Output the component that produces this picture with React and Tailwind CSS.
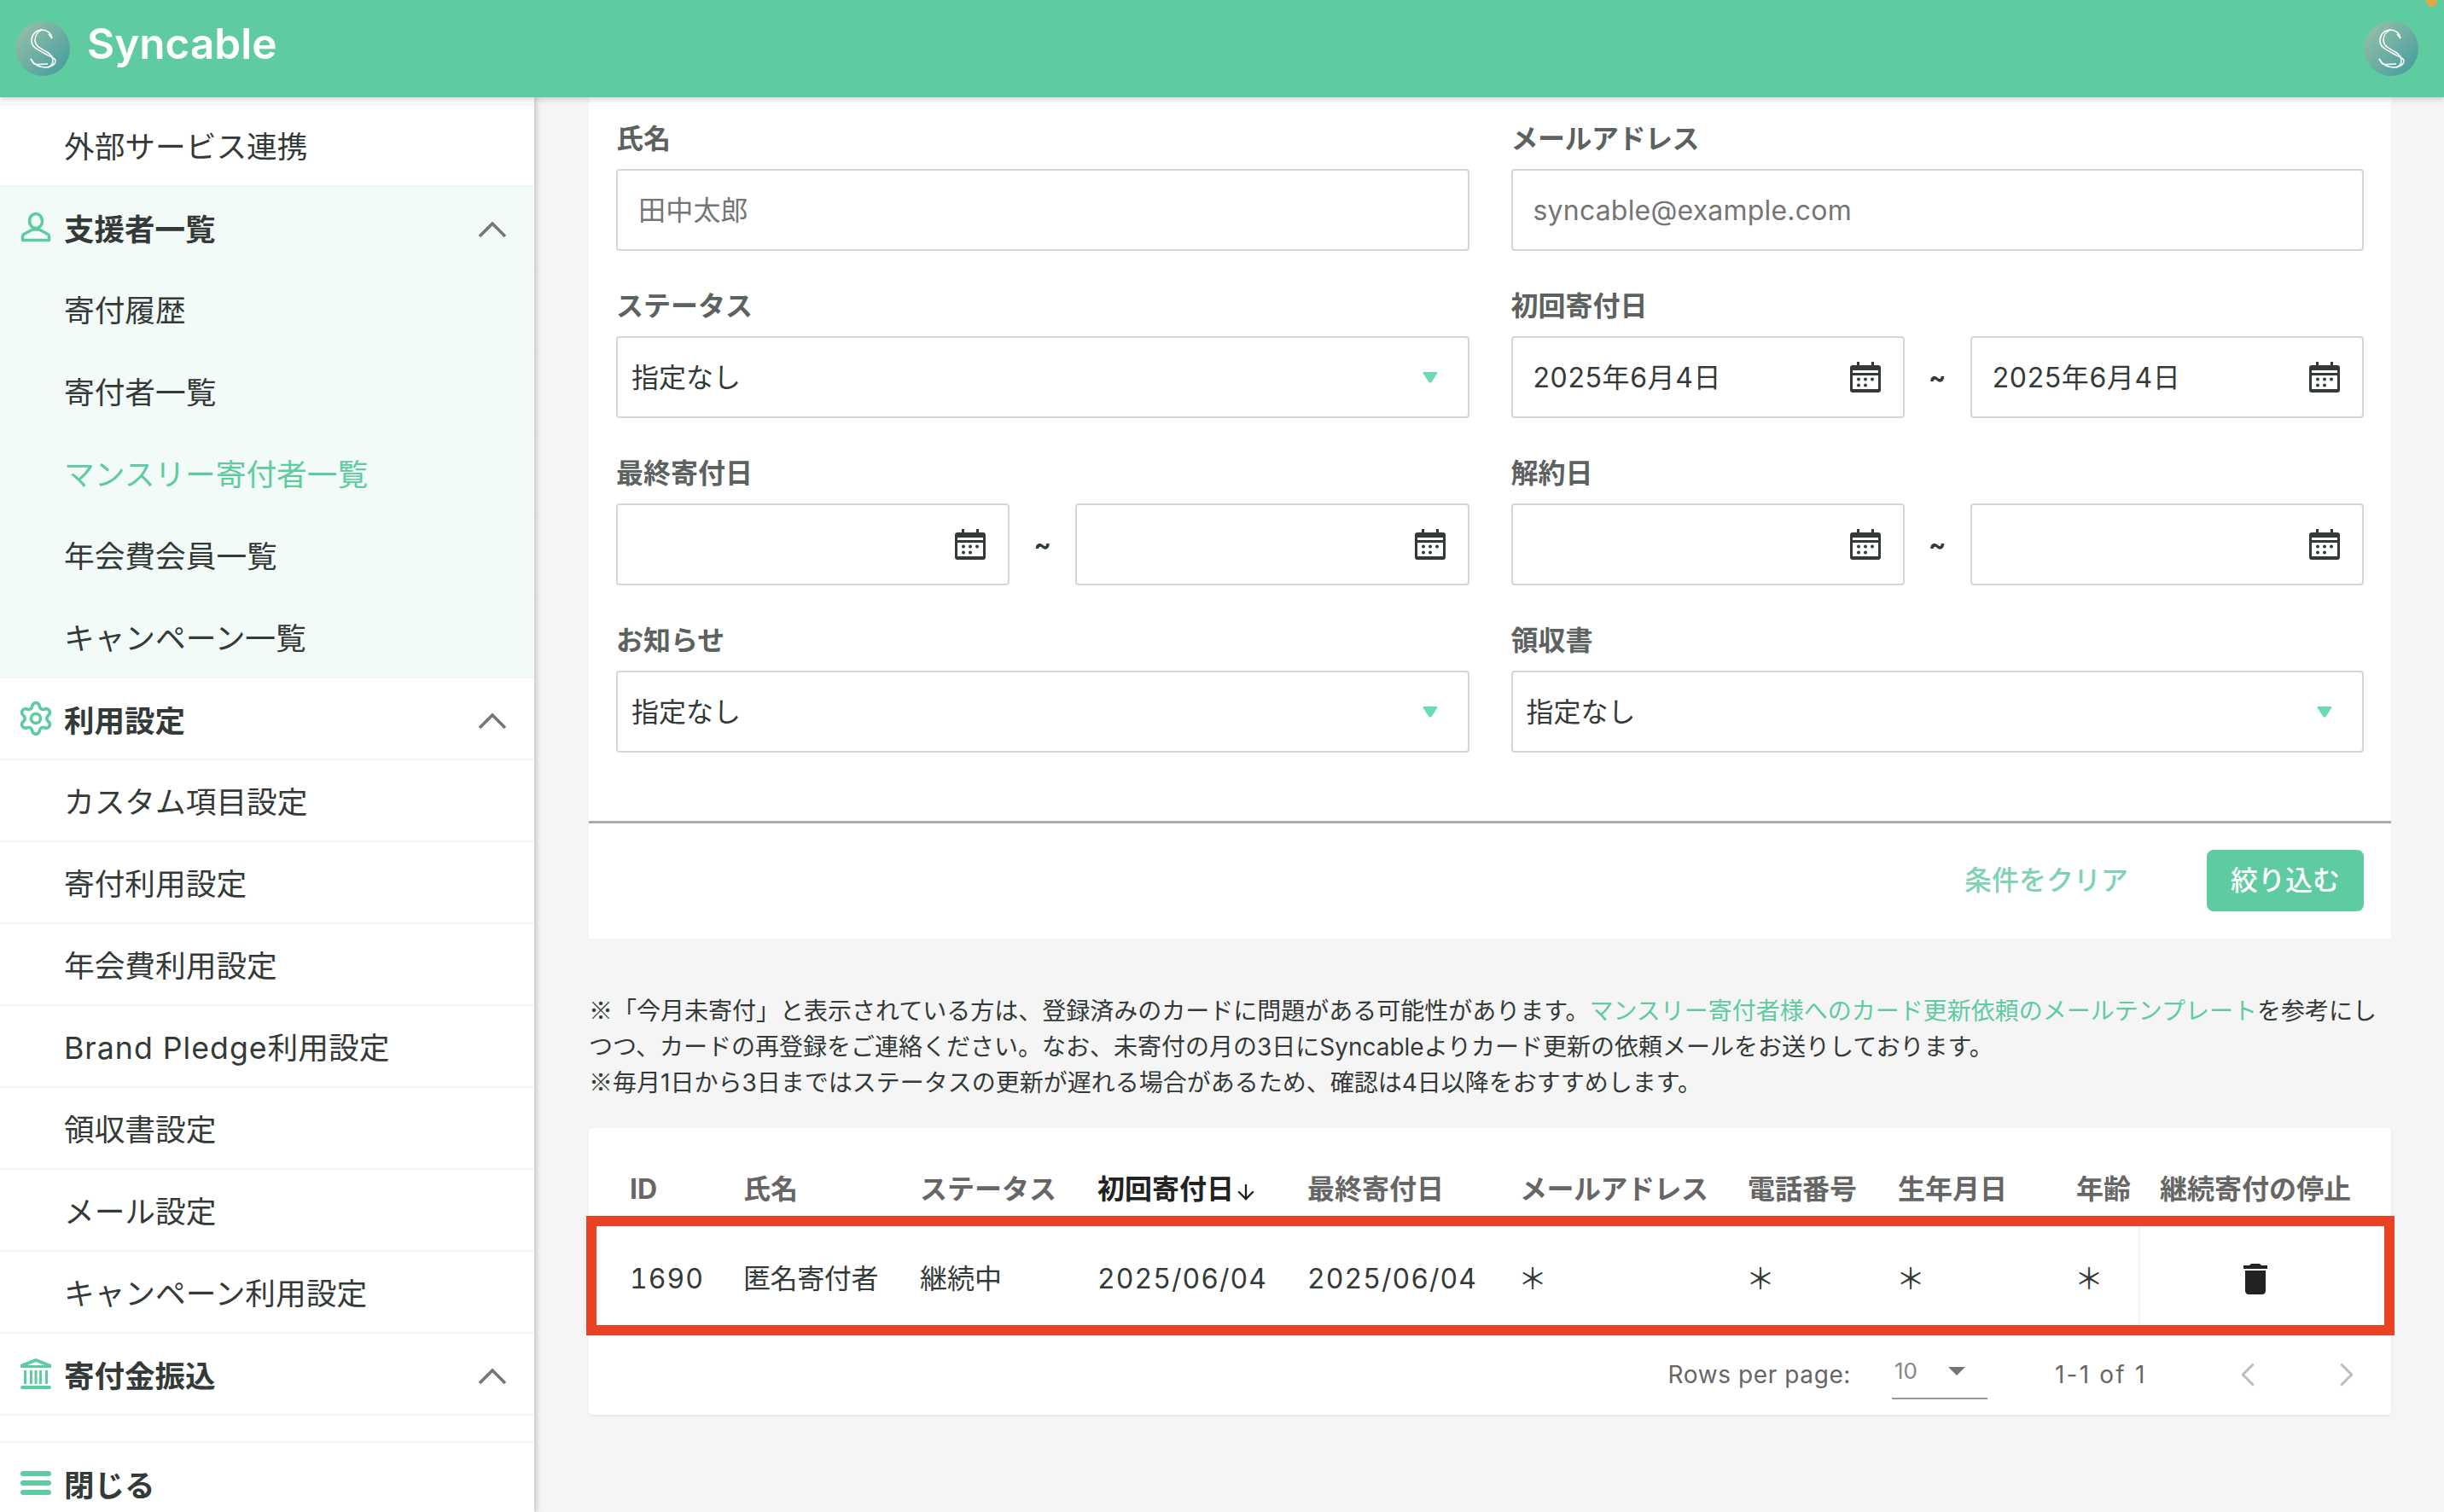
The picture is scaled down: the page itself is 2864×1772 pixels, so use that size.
import { Settings, ChevronLeft, ChevronRight, ArrowDown } from 'lucide-react';

function LogoMark() {
  return (
    <div className="w-[64px] h-[64px] rounded-full bg-gradient-to-br from-[#9bc2a8] to-[#3a9a9e] shrink-0">
      <svg viewBox="0 0 64 64" className="w-full h-full" fill="none" stroke="#fff" strokeWidth="1.5">
        <path d="M43 20 C42 13 36 10 31 10 C24 10 19 16 19 23 C19 30 26 33 33 37 C40 41 47 43 47 46 C47 51 41 54 35 54 C28 54 21 50 18 44" />
        <path d="M31 10 C26 12 23 17 23 22 C23 29 30 32 37 36 C43 39 44 43 44 47 C44 50 42 52 38 54" />
        <path d="M43 20 L39 15 M18 44 L22 50 C25 51 32 50 38 50" />
      </svg>
    </div>
  );
}

function PersonIcon() {
  return (
    <svg viewBox="0 0 36 36" className="w-[36px] h-[36px]" fill="none" stroke="#5ecba1" strokeWidth="3.5" strokeLinejoin="round">
      <ellipse cx="18" cy="11" rx="7.5" ry="8.5" />
      <path d="M2.5 29 Q2.5 27.5 4 26.5 L14 21 H22 L32 26.5 Q33.5 27.5 33.5 29 V33.5 H2.5 Z" />
    </svg>
  );
}

function BankIcon() {
  return (
    <svg viewBox="0 0 36 36" className="w-[36px] h-[36px]" fill="#5ecba1">
      <path d="M18 0 L36 7 V11 H0 V7 Z M18 4 L8 8 H28 Z" fillRule="evenodd" />
      <rect x="4" y="14" width="3" height="16" />
      <rect x="11" y="14" width="3" height="16" />
      <rect x="22" y="14" width="3" height="16" />
      <rect x="29" y="14" width="3" height="16" />
      <rect x="16.5" y="14" width="3" height="16" />
      <rect x="0" y="32" width="36" height="4" rx="2" />
    </svg>
  );
}

function MenuIcon() {
  return (
    <svg viewBox="0 0 36 32" className="w-[36px] h-[32px]" fill="#5ecba1">
      <rect y="2" width="36" height="6" rx="3" />
      <rect y="13" width="36" height="6" rx="3" />
      <rect y="24" width="36" height="6" rx="3" />
    </svg>
  );
}

function CalendarIcon() {
  return (
    <svg viewBox="0 0 36 36" className="w-[36px] h-[36px] shrink-0">
      <path d="M8 0 H11 V4 H25 V0 H28 V4 H33 Q36 4 36 7 V33 Q36 36 33 36 H3 Q0 36 0 33 V7 Q0 4 3 4 H8 Z" fill="#333a38" />
      <rect x="3" y="10" width="30" height="3" fill="#fff" />
      <rect x="3" y="16" width="30" height="16" fill="#fff" />
      {[10, 18, 26].map((x) => <circle key={x} cx={x} cy="20.5" r="2" fill="#333a38" />)}
      {[10, 18].map((x) => <circle key={x} cx={x} cy="27.5" r="2" fill="#333a38" />)}
    </svg>
  );
}

function TrashIcon() {
  return (
    <svg viewBox="0 0 24 24" className="w-[48px] h-[48px] mx-auto" fill="#222">
      <path d="M6 19c0 1.1.9 2 2 2h8c1.1 0 2-.9 2-2V7H6v12zM19 4h-3.5l-1-1h-5l-1 1H5v2h14V4z" />
    </svg>
  );
}

function NavHead({ icon, label, active, chevron = true }) {
  return (
    <div className={`h-[96px] flex items-center pl-[24px] pr-[32px] border-b-2 border-[#f4f5f5] ${active ? 'bg-[#f2fbf8]' : ''}`}>
      <div className="w-[36px] flex justify-center shrink-0">{icon}</div>
      <span className="ml-[15px] pt-[7px] font-bold text-[35.5px] text-[#333a38]">{label}</span>
      {chevron && (
        <svg viewBox="0 0 34 20" className="ml-auto mt-[6px] w-[34px] h-[20px]" fill="none" stroke="#757575" strokeWidth="3.5">
          <path d="M2 18 L17 3 L32 18" />
        </svg>
      )}
    </div>
  );
}

function NavItem({ label, active, current }) {
  return (
    <div
      className={`h-[96px] flex items-center pl-[75px] pt-[6px] border-b-2 border-[#f4f5f5] text-[35.7px] ${active ? 'bg-[#f2fbf8]' : ''} ${current ? 'text-[#5ecba1]' : 'text-[#333a38]'}`}
    >
      <span>{label}</span>
    </div>
  );
}

function Sidebar() {
  return (
    <aside className="w-[626px] shrink-0 bg-white shadow-[3px_0_6px_rgba(0,0,0,0.18)] z-10 overflow-hidden">
      <div className="h-[9px] border-b-2 border-[#f4f5f5]" />
      <NavItem label="外部サービス連携" />
      <NavHead active icon={<PersonIcon />} label="支援者一覧" />
      <NavItem active label="寄付履歴" />
      <NavItem active label="寄付者一覧" />
      <NavItem active current label="マンスリー寄付者一覧" />
      <NavItem active label="年会費会員一覧" />
      <NavItem active label="キャンペーン一覧" />
      <NavHead icon={<Settings className="text-[#5ecba1] shrink-0" size={44} strokeWidth={2} />} label="利用設定" />
      <NavItem label="カスタム項目設定" />
      <NavItem label="寄付利用設定" />
      <NavItem label="年会費利用設定" />
      <NavItem label={<><span className="tracking-[1px]">Brand Pledge</span>利用設定</>} />
      <NavItem label="領収書設定" />
      <NavItem label="メール設定" />
      <NavItem label="キャンペーン利用設定" />
      <NavHead icon={<BankIcon />} label="寄付金振込" />
      <div className="h-[32px] border-b-2 border-[#f4f5f5]" />
      <NavHead icon={<MenuIcon />} label="閉じる" chevron={false} />
    </aside>
  );
}

function Field({ label, children }) {
  return (
    <div>
      <div className="h-[48px] pt-[3px] flex items-center text-[32px] font-bold text-[#5c6260]">{label}</div>
      <div className="mt-[13px]">{children}</div>
    </div>
  );
}

const boxClass = 'h-[96px] pt-[2px] border-2 border-[#d3d8d7] rounded-[4px] flex items-center bg-white text-[32px]';

function TextInput({ placeholder }) {
  return <div className={`${boxClass} pl-[24px] tracking-[0.2px] text-[#757575]`}>{placeholder}</div>;
}

function SelectInput() {
  return (
    <div className={`${boxClass} pl-[16px] pr-[35px] text-[#333a38]`}>
      指定なし
      <svg viewBox="0 0 18 13" className="ml-auto mb-[2px] w-[18px] h-[13px]" fill="#6ddbb1">
        <path d="M1.5 0 H16.5 Q18 0 17.4 1.5 L10.5 12 Q9 13.5 7.5 12 L0.6 1.5 Q0 0 1.5 0 Z" />
      </svg>
    </div>
  );
}

function DateRange({ from, to }) {
  const box = (value) => (
    <div className={`${boxClass} flex-1 pl-[24px] pr-[26px] tracking-[0.6px] text-[#333a38]`}>
      {value}
      <span className="ml-auto mb-[2px]"><CalendarIcon /></span>
    </div>
  );
  return (
    <div className="flex items-center">
      {box(from)}
      <div className="w-[77px] text-center font-bold text-[30px] text-[#333a38]">~</div>
      {box(to)}
    </div>
  );
}

function FilterCard() {
  return (
    <section className="bg-white">
      <div className="px-[32px] pt-[23px] grid grid-cols-2 gap-x-[49px] gap-y-[39px]">
        <Field label="氏名"><TextInput placeholder="田中太郎" /></Field>
        <Field label={<span className="tracking-[-0.5px]">メールアドレス</span>}><TextInput placeholder="syncable@example.com" /></Field>
        <Field label="ステータス"><SelectInput /></Field>
        <Field label="初回寄付日"><DateRange from="2025年6月4日" to="2025年6月4日" /></Field>
        <Field label="最終寄付日"><DateRange /></Field>
        <Field label="解約日"><DateRange /></Field>
        <Field label="お知らせ"><SelectInput /></Field>
        <Field label="領収書"><SelectInput /></Field>
      </div>
      <div className="mt-[80px] h-[3px] bg-[#a9abab]" />
      <div className="h-[135px] pb-[2px] flex items-center justify-end pr-[32px]">
        <span className="text-[32px] font-medium text-[#7ed3b2]">条件をクリア</span>
        <button className="ml-[92px] w-[184px] h-[72px] rounded-[8px] bg-[#5ecba1] text-white text-[32px] font-medium">絞り込む</button>
      </div>
    </section>
  );
}

const columns = [
  { label: 'ID', value: '1690', width: 'w-[167px]', pad: 'pl-[48px]', cell: 'text-[32px] tabular-nums tracking-[1px]' },
  { label: '氏名', value: '匿名寄付者', width: 'w-[207px]', cell: 'text-[32px] tracking-[-0.4px]' },
  { label: 'ステータス', value: '継続中', width: 'w-[208px]', cell: 'text-[32px]' },
  { label: '初回寄付日', value: '2025/06/04', width: 'w-[246px]', sorted: true, cell: 'text-[32px] tabular-nums tracking-[1px]' },
  { label: '最終寄付日', value: '2025/06/04', width: 'w-[249px]', cell: 'text-[32px] tabular-nums tracking-[1px]' },
  { label: 'メールアドレス', value: '＊', width: 'w-[267px]', star: true, cell: 'text-[34px]' },
  { label: '電話番号', value: '＊', width: 'w-[176px]', star: true, cell: 'text-[34px]' },
  { label: '生年月日', value: '＊', width: 'w-[209px]', star: true, cell: 'text-[34px]' },
  { label: '年齢', value: '＊', width: 'w-[88px]', star: true, cell: 'text-[34px]' },
];

function DonorTable() {
  return (
    <section className="relative mt-[32px] h-[336px] bg-white rounded-[4px] shadow-[0_1px_3px_rgba(0,0,0,0.08)]">
      <table className="w-full table-fixed border-collapse">
        <thead>
          <tr className="h-[103px]">
            {columns.map((c) => (
              <th key={c.label} className={`${c.width} ${c.pad || 'pl-[14px]'} pt-[41px] text-left whitespace-nowrap text-[32px] font-bold ${c.sorted ? 'text-[#222]' : 'text-[#666]'} ${c.star && c.label === 'メールアドレス' ? 'tracking-[-0.5px]' : ''}`}>
                <span className="inline-flex items-center">
                  {c.label}
                  {c.sorted && <ArrowDown size={28} strokeWidth={2} className="mt-[6px]" />}
                </span>
              </th>
            ))}
            <th className="pl-[24px] pt-[41px] text-left whitespace-nowrap text-[32px] font-bold text-[#666]">継続寄付の停止</th>
          </tr>
        </thead>
        <tbody>
          <tr className="h-[140px]">
            {columns.map((c) => (
              <td
                key={c.label}
                className={`${c.pad || 'pl-[14px]'} pt-[7px] whitespace-nowrap ${c.cell} text-[#333a38]`}
              >
                <span className={c.star ? 'inline-block ml-[-2px]' : ''}>{c.value}</span>
              </td>
            ))}
            <td className="border-l-2 border-[#f2f2f2] pt-[7px] pr-[24px]"><TrashIcon /></td>
          </tr>
        </tbody>
      </table>
      <div className="absolute left-[-3px] right-[-4px] top-[103px] h-[140px] border-[12px] border-[#eb4125]" />
      <div className="h-[93px] pb-[2px] flex items-center justify-end pr-[29px] text-[#666] text-[28px]">
        <span className="tracking-[0.6px]">Rows per page:</span>
        <div className="ml-[48px] w-[112px] h-[56px] border-b-2 border-[#999] flex items-center pl-[3px] mb-[-2px]">
          <span className="text-[26px] text-[#888] mb-[8px]">10</span>
          <svg viewBox="0 0 20 10" className="ml-auto mr-[26px] mb-[8px] w-[20px] h-[10px]" fill="#757575"><path d="M0 0 H20 L10 10 Z" /></svg>
        </div>
        <span className="ml-[79px] w-[104px] whitespace-nowrap tracking-[2.2px]">1-1 of 1</span>
        <ChevronLeft className="ml-[99px] text-[#bdbdbd]" size={46} strokeWidth={1.6} />
        <ChevronRight className="ml-[70px] text-[#bdbdbd]" size={46} strokeWidth={1.6} />
      </div>
    </section>
  );
}

export default function App() {
  return (
    <div className="h-[1772px] w-[2864px] overflow-hidden flex flex-col bg-[#f5f5f5] font-['Inter','Noto_Sans_CJK_JP',sans-serif] text-[#333a38]">
      <header className="relative h-[114px] shrink-0 bg-[#5ecba1] flex items-center pl-[18px] pr-[30px] shadow-[0_3px_6px_rgba(0,0,0,0.15)] z-20">
        <LogoMark />
        <span className="ml-[20px] mb-[12px] text-white text-[49.5px] font-semibold">Syncable</span>
        <div className="ml-auto"><LogoMark /></div>
        <span className="absolute right-[8px] top-[-8px] w-[13px] h-[16px] rounded-full bg-[#d9a94c]" />
      </header>
      <div className="flex flex-1 min-h-0">
        <Sidebar />
        <main className="flex-1 pl-[64px] pr-[62px]">
          <FilterCard />
          <p className="mt-[64px] h-[126px] text-[28px] leading-[42px] whitespace-nowrap text-[#333a38]">
            <span className="font-['Noto_Sans_CJK_JP'] leading-none">※</span>「今月未寄付」と表示されている方は、登録済みのカードに問題がある可能性があります。<span className="text-[#5ecba1]">マンスリー寄付者様へのカード更新依頼のメールテンプレート</span>を参考にし
            <br />
            つつ、カードの再登録をご連絡ください。なお、未寄付の月の3日にSyncableよりカード更新の依頼メールをお送りしております。
            <br />
            <span className="font-['Noto_Sans_CJK_JP'] leading-none">※</span>毎月1日から3日まではステータスの更新が遅れる場合があるため、確認は4日以降をおすすめします。
          </p>
          <DonorTable />
        </main>
      </div>
    </div>
  );
}
